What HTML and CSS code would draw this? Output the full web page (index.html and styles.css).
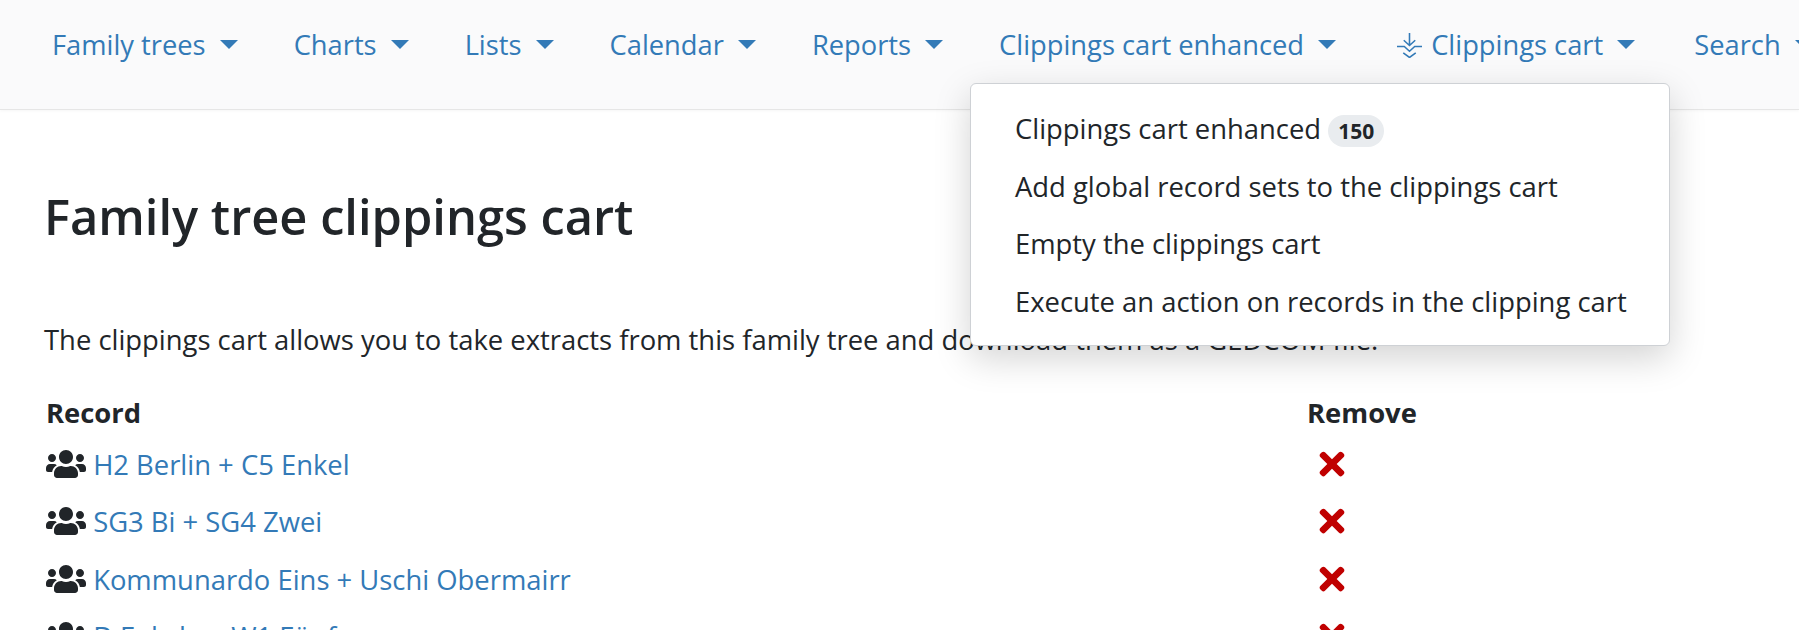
FILE: index.html
```html
<!DOCTYPE html>
<html lang="en">
<head>
<meta charset="UTF-8">
<title>Family tree clippings cart</title>
<link rel="stylesheet" href="styles.css">
</head>
<body>
<svg class="defs" width="0" height="0">
    <symbol id="users" viewBox="0 0 640 512"><path fill="currentColor" d="M96 224c35.3 0 64-28.7 64-64s-28.7-64-64-64-64 28.7-64 64 28.7 64 64 64zm448 0c35.3 0 64-28.7 64-64s-28.7-64-64-64-64 28.7-64 64 28.7 64 64 64zm32 32h-64c-17.6 0-33.5 7.1-45.1 18.6 40.3 22.1 68.9 62 75.1 109.4h66c17.7 0 32-14.3 32-32v-32c0-35.3-28.7-64-64-64zm-256 0c61.9 0 112-50.1 112-112S381.9 32 320 32 208 82.1 208 144s50.1 112 112 112zm76.8 32h-8.3c-20.8 10-43.9 16-68.5 16s-47.6-6-68.5-16h-8.3C179.6 288 128 339.6 128 403.2V432c0 26.5 21.5 48 48 48h288c26.5 0 48-21.5 48-48v-28.8c0-63.6-51.6-115.2-115.2-115.2zm-223.7-13.4C161.5 263.1 145.6 256 128 256H64c-35.3 0-64 28.7-64 64v32c0 17.7 14.3 32 32 32h65.9c6.3-47.4 34.9-87.3 75.2-109.4z"/></symbol>
    <symbol id="times" viewBox="0 0 352 512"><path fill="currentColor" d="M242.72 256l100.07-100.07c12.28-12.28 12.28-32.19 0-44.48l-22.24-22.24c-12.28-12.28-32.19-12.28-44.48 0L176 189.28 75.93 89.21c-12.28-12.28-32.19-12.28-44.48 0L9.21 111.45c-12.28 12.28-12.28 32.19 0 44.48L109.28 256 9.21 356.07c-12.28 12.28-12.28 32.19 0 44.48l22.24 22.24c12.28 12.28 32.2 12.28 44.48 0L176 322.72l100.07 100.07c12.28 12.28 32.2 12.28 44.48 0l22.24-22.24c12.28-12.28 12.28-32.19 0-44.48L242.72 256z"/></symbol>
</svg>

<nav class="menu-bar">
    <a class="menu-item" href="#">Family trees</a>
    <a class="menu-item" href="#">Charts</a>
    <a class="menu-item" href="#">Lists</a>
    <a class="menu-item" href="#">Calendar</a>
    <a class="menu-item" href="#">Reports</a>
    <a class="menu-item" href="#">Clippings cart enhanced</a>
    <a class="menu-item menu-cart" href="#"><svg class="cart-icon" viewBox="0 0 24 24"><path d="M12 0v12M6.500 7l5.500 5 5.500-5M0 13h7l5 4.500 5-4.500h7M6 19l6 4.500 6-4.500"/></svg> Clippings cart</a>
    <a class="menu-item" href="#">Search</a>
</nav>

<div class="dropdown">
    <a href="#">Clippings cart enhanced <span class="badge">150</span></a>
    <a href="#">Add global record sets to the clippings cart</a>
    <a href="#">Empty the clippings cart</a>
    <a href="#">Execute an action on records in the clipping cart</a>
</div>

<main class="content">
    <h2>Family tree clippings cart</h2>
    <p>The clippings cart allows you to take extracts from this family tree and download them as a GEDCOM file.</p>
    <table class="records">
        <thead>
            <tr><th class="col-record">Record</th><th>Remove</th></tr>
        </thead>
        <tbody>
            <tr>
                <td><svg class="users"><use href="#users"/></svg> <a href="#">H2 Berlin + C5 Enkel</a></td>
                <td><svg class="times"><use href="#times"/></svg></td>
            </tr>
            <tr>
                <td><svg class="users"><use href="#users"/></svg> <a href="#">SG3 Bi + SG4 Zwei</a></td>
                <td><svg class="times"><use href="#times"/></svg></td>
            </tr>
            <tr>
                <td><svg class="users"><use href="#users"/></svg> <a href="#">Kommunardo Eins + Uschi Obermairr</a></td>
                <td><svg class="times"><use href="#times"/></svg></td>
            </tr>
            <tr>
                <td><svg class="users"><use href="#users"/></svg> <a href="#">D Fuhrle + W1 Fünf</a></td>
                <td><svg class="times"><use href="#times"/></svg></td>
            </tr>
        </tbody>
    </table>
</main>
</body>
</html>
```

FILE: styles.css
```css
html, body {
    height: 630px;
    overflow: hidden;
}
body {
    margin: 0;
    position: relative;
    font-family: "Open Sans", "Noto Sans", sans-serif;
    font-size: 27.4px;
    line-height: 1.5;
    color: #212529;
    background: #fff;
}
a {
    color: #337ab7;
    text-decoration: none;
}
.defs {
    position: absolute;
}
.menu-bar {
    display: flex;
    height: 110px;
    box-sizing: border-box;
    padding: 25px 0 0 28px;
    background: #fafafb;
    border-bottom: 1px solid #e6e6e6;
    box-shadow: 0 1px 3px rgba(0, 0, 0, 0.04);
    white-space: nowrap;
}
.menu-item {
    display: block;
    flex-shrink: 0;
    height: 41px;
    padding: 0 24px;
    margin-right: 8px;
    font-size: 27.300px;
}
.menu-item::after {
    content: "";
    display: inline-block;
    margin-left: 14px;
    vertical-align: 6px;
    border-top: 9px solid;
    border-left: 9px solid transparent;
    border-right: 9px solid transparent;
}
.menu-cart {
    margin-left: 5px;
    margin-right: 11px;
}
.cart-icon {
    width: 25px;
    height: 25px;
    margin-right: 2px;
    vertical-align: -3px;
    fill: none;
    stroke: currentColor;
    stroke-width: 1.5;
}
.dropdown {
    position: absolute;
    left: 970px;
    top: 83px;
    width: 700px;
    height: 263px;
    box-sizing: border-box;
    padding: 17px 0 0;
    background: #fff;
    border: 1px solid #ced1d5;
    border-radius: 6px;
    box-shadow: 0 12px 36px rgba(0, 0, 0, 0.175);
}
.dropdown a {
    display: block;
    padding: 7px 44px 8px;
    height: 57.500px;
    box-sizing: border-box;
    color: #212529;
    white-space: nowrap;
}
.badge {
    display: inline-block;
    padding: 5px 10px;
    font-size: 21px;
    font-weight: 700;
    line-height: 1.050;
    background: #e9ecef;
    border-radius: 16px;
}
.content {
    padding: 77px 44px 0;
}
h2 {
    margin: 0 0 73px;
    font-size: 48.800px;
    font-weight: 600;
    line-height: 1.2;
}
p {
    margin: 0 0 30px;
}
.records {
    border-collapse: collapse;
    width: 100%;
}
.records th {
    padding: 2px 2px 3px;
    text-align: left;
    font-weight: 700;
}
.records td {
    height: 57.500px;
    padding: 0 2px;
}
.col-record {
    width: 1257px;
}
.users {
    width: 40px;
    height: 32px;
    color: #212529;
    vertical-align: -5px;
}
.times {
    width: 26px;
    height: 36px;
    margin-left: 12px;
    color: #c00000;
    vertical-align: -7px;
}
```
